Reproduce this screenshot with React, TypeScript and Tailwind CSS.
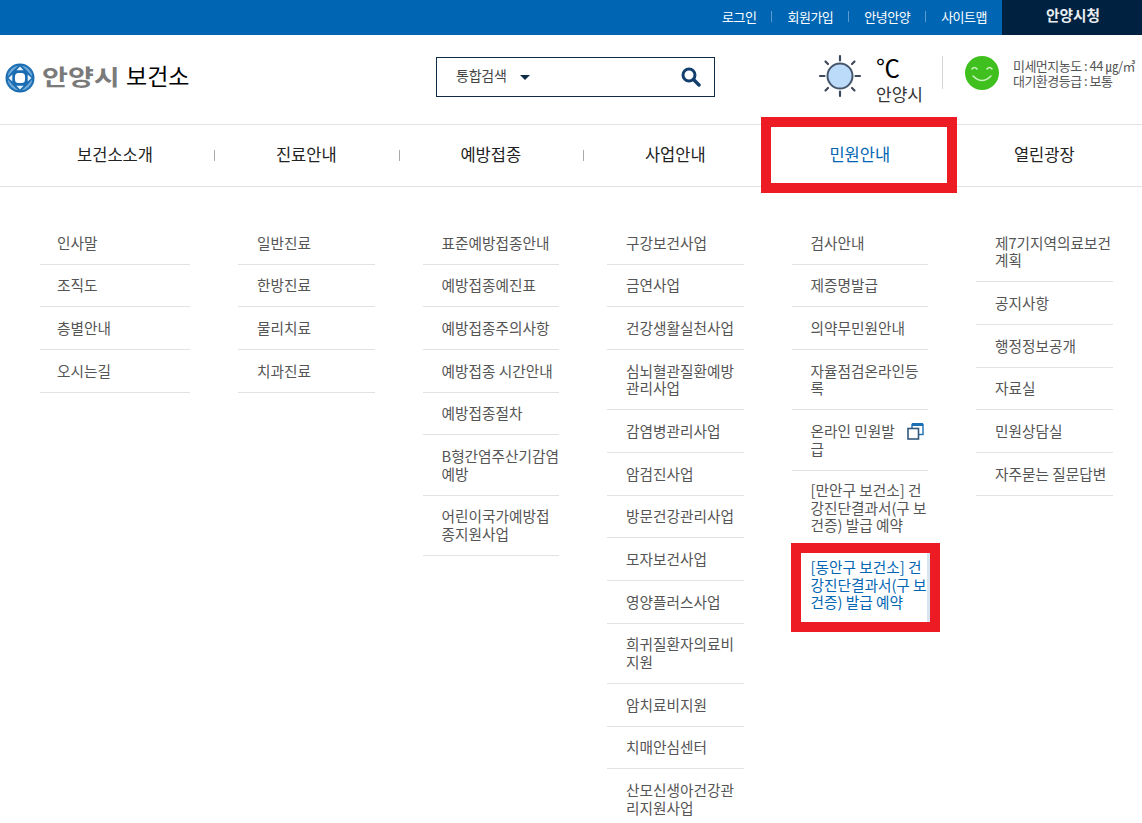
import React from 'react';

const topLinks = ['로그인', '회원가입', '안녕안양', '사이트맵'];

const columns = [
  { title: '보건소소개', items: ['인사말', '조직도', '층별안내', '오시는길'] },
  { title: '진료안내', items: ['일반진료', '한방진료', '물리치료', '치과진료'] },
  {
    title: '예방접종',
    items: [
      '표준예방접종안내',
      '예방접종예진표',
      '예방접종주의사항',
      '예방접종 시간안내',
      '예방접종절차',
      'B형간염주산기감염\n예방',
      '어린이국가예방접\n종지원사업',
    ],
  },
  {
    title: '사업안내',
    items: [
      '구강보건사업',
      '금연사업',
      '건강생활실천사업',
      '심뇌혈관질환예방\n관리사업',
      '감염병관리사업',
      '암검진사업',
      '방문건강관리사업',
      '모자보건사업',
      '영양플러스사업',
      '희귀질환자의료비\n지원',
      '암치료비지원',
      '치매안심센터',
      '산모신생아건강관\n리지원사업',
    ],
  },
  {
    title: '민원안내',
    items: [
      '검사안내',
      '제증명발급',
      '의약무민원안내',
      '자율점검온라인등\n록',
      '온라인 민원발\n급',
      '[만안구 보건소] 건\n강진단결과서(구 보\n건증) 발급 예약',
      '[동안구 보건소] 건\n강진단결과서(구 보\n건증) 발급 예약',
    ],
  },
  {
    title: '열린광장',
    items: ['제7기지역의료보건\n계획', '공지사항', '행정정보공개', '자료실', '민원상담실', '자주묻는 질문답변'],
  },
];

const Globe = () => (
  <svg width="30" height="30" viewBox="0 0 30 30" className="shrink-0">
    <circle cx="15" cy="15" r="14.5" fill="#1b6db3" />
    <circle cx="15" cy="15" r="13" fill="#6fa9d8" />
    <path d="M2 15a13 13 0 0 1 13-13 13 13 0 0 1 13 13 13 13 0 0 1-13 13A13 13 0 0 1 2 15z" fill="none" stroke="#1b6db3" strokeWidth="1" />
    <path d="M15 1.5C9 6 6 10 1.5 15 6 20 9 24 15 28.5 21 24 24 20 28.5 15 24 10 21 6 15 1.5z" fill="#1b6db3" />
    <rect x="8" y="8" width="14" height="14" rx="5" fill="#1b6db3" />
    <rect x="10" y="10" width="10" height="10" rx="3.5" fill="#fff" />
    <path d="M15 3.5l3.6 3.8h-7.2zM15 26.5l3.6-3.8h-7.2zM3.5 15l3.8-3.6v7.2zM26.5 15l-3.8-3.6v7.2z" fill="#e4f0fa" />
  </svg>
);

const Sun = () => (
  <svg width="44" height="44" viewBox="0 0 44 44" className="shrink-0">
    <circle cx="22" cy="22" r="12.5" fill="#bcdafa" stroke="#46566b" strokeWidth="2" />
    <path
      d="M22 2v4.5M22 37.5V42M2 22h4.5M37.5 22H42M7.5 7.5L10 10M34 34l2.5 2.5M7.5 36.5L10 34M34 10l2.5-2.5"
      stroke="#3d4a5c"
      strokeWidth="2.2"
      strokeLinecap="round"
    />
  </svg>
);

const Smile = () => (
  <svg width="34" height="34" viewBox="0 0 34 34" className="shrink-0">
    <circle cx="17" cy="17" r="17" fill="#3fc01f" />
    <path d="M7 13q2.5-3 5 0M22 13q2.5-3 5 0M8 20q9 9 18 0" stroke="#c9f2bd" strokeWidth="1.6" fill="none" strokeLinecap="round" />
  </svg>
);

const SearchIcon = () => (
  <svg width="20" height="20" viewBox="0 0 20 20">
    <circle cx="8" cy="8" r="6" fill="none" stroke="#123f6d" strokeWidth="3" />
    <path d="M12.5 12.5L18 18" stroke="#123f6d" strokeWidth="3.4" strokeLinecap="round" />
  </svg>
);

const NewWindow = () => (
  <svg width="17" height="18" viewBox="0 0 17 18" className="absolute right-[4px] top-[12px]">
    <rect x="5" y="2.5" width="11" height="10" fill="#fff" stroke="#1a6fb5" strokeWidth="1.4" />
    <path d="M5 2.5h11" stroke="#1a6fb5" strokeWidth="3" />
    <rect x="1" y="6.5" width="10.5" height="10.5" fill="#fff" stroke="#34597d" strokeWidth="1.6" />
  </svg>
);

// padding differs a little on the two long reservation rows
const rowPadding = (item: string) => {
  if (item.startsWith('[만안구')) return 'pb-[13.4px] pt-[10.7px]';
  if (item.startsWith('[동안구')) return 'pb-[12.4px] pt-[9.7px]';
  return 'pb-[12.4px] pt-[11.7px]';
};

export default function App() {
  return (
    <div className="relative h-[823px] overflow-hidden bg-white font-['Noto_Sans_CJK_KR','Liberation_Sans',sans-serif]">
      {/* top bar */}
      <div className="flex h-[35px] items-center justify-end bg-[#0066b3]">
        <ul className="flex items-center pb-[2px] pr-[15px] text-[13px] tracking-[-0.5px] text-white">
          {topLinks.map((link, i) => (
            <li key={link} className="flex items-center">
              {i > 0 && <span className="mx-[15px] h-[11px] w-px bg-[#5b9bd0]" />}
              {link}
            </li>
          ))}
        </ul>
        <div className="flex h-full w-[140px] items-center justify-center bg-[#00213f] pb-[6px] pl-[2px] text-[14.67px] font-bold text-[#e8edf2]">
          안양시청
        </div>
      </div>

      {/* logo, search, weather */}
      <div className="flex h-[89px] items-start">
        <div className="ml-[5px] mt-[25px] flex w-[431px] items-center">
          <Globe />
          <span className="mb-[6px] ml-[7px] inline-block w-[80px] origin-left scale-x-[1.28] text-[22px] font-bold leading-[30px] text-[#7a7a7a]">
            안양시
          </span>
          <span className="mb-[6px] ml-[4px] text-[23px] leading-[30px] text-black">보건소</span>
        </div>

        <div className="mt-[22px] flex h-[40px] w-[279px] items-center border border-[#0f2b46] pl-[19px] pr-[13px]">
          <span className="pb-[3px] text-[14px] tracking-[-0.2px] text-[#444]">통합검색</span>
          <span className="ml-[13px] h-0 w-0 border-x-[5px] border-t-[5px] border-x-transparent border-t-[#0f2b46]" />
          <span className="ml-auto flex">
            <SearchIcon />
          </span>
        </div>

        <div className="ml-[103px] mt-[19px]">
          <Sun />
        </div>
        <div className="ml-[14px] mt-[18px] flex flex-col text-black">
          <span className="text-[24px] leading-[28px] tracking-[-1px]">℃</span>
          <span className="mt-[1px] text-[17px] leading-[24px] text-[#333]">안양시</span>
        </div>
        <div className="ml-[19px] mt-[21px] h-[33px] w-px bg-[#d5d5d5]" />
        <div className="ml-[22px] mt-[21px]">
          <Smile />
        </div>
        <div className="ml-[14px] mt-[23px] whitespace-nowrap text-[13px] leading-[15px] tracking-[-0.5px] text-[#555]">
          <p>미세먼지농도 : 44 ㎍/㎥</p>
          <p>대기환경등급 : 보통</p>
        </div>
      </div>

      {/* main nav */}
      <nav className="grid h-[63px] grid-cols-[198px_repeat(5,184.5px)] border-y border-[#e2e2e2] pl-[16px]">
        {columns.map((col, i) => (
          <div key={col.title} className="relative flex items-center justify-center pb-[2px]">
            {i > 0 && <span className="absolute left-0 top-[25px] h-[11px] w-px bg-[#aaa]" />}
            <span className={`text-[16.5px] ${col.title === '민원안내' ? 'text-[#0066b3]' : 'text-[#222]'}`}>
              {col.title}
            </span>
          </div>
        ))}
      </nav>

      {/* dropdown columns */}
      <div className="grid grid-cols-[198px_repeat(5,184.5px)] pl-[16px] pt-[35px]">
        {columns.map((col, c) => (
          <ul key={col.title} className="mx-[24px]">
            {col.items.map((item) => (
              <li
                key={item}
                className={`relative whitespace-pre border-b border-[#e2e2e2] text-[14.67px] leading-[17.6px] ${rowPadding(item)} ${
                  c === 0 ? 'pl-[17px]' : 'pl-[19px]'
                } ${item.startsWith('[동안구') ? 'border-b-0 text-[#0066b3]' : 'text-[#555]'}`}
              >
                {item}
                {item.startsWith('온라인') && <NewWindow />}
              </li>
            ))}
          </ul>
        ))}
      </div>

      {/* red highlight boxes */}
      <div className="absolute left-[761px] top-[117px] h-[76px] w-[196px] border-[10px] border-[#ed1c24]" />
      <div className="absolute left-[791px] top-[543px] h-[89px] w-[149px] border-[10px] border-[#ed1c24]">
        <div className="h-full border-r-[3px] border-[#d8e5f0]" />
      </div>
    </div>
  );
}
